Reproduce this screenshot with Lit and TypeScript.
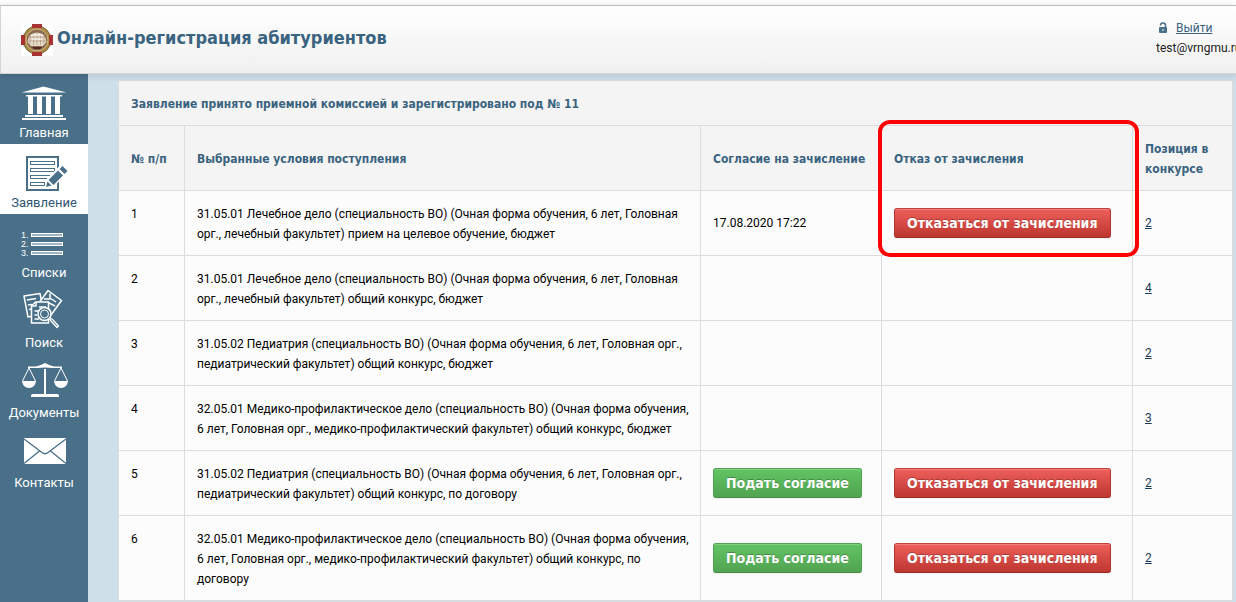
import { LitElement, html, svg, css, nothing } from 'lit';
import { customElement, state } from 'lit/decorators.js';
import { classMap } from 'lit/directives/class-map.js';

interface Condition {
  text: string;
  agreedAt?: string;
  canAgree?: boolean;
  canRefuse?: boolean;
  position: number;
}

const CONDITIONS: Condition[] = [
  {
    text: '31.05.01 Лечебное дело (специальность ВО) (Очная форма обучения, 6 лет, Головная орг., лечебный факультет) прием на целевое обучение, бюджет',
    agreedAt: '17.08.2020 17:22',
    canRefuse: true,
    position: 2,
  },
  {
    text: '31.05.01 Лечебное дело (специальность ВО) (Очная форма обучения, 6 лет, Головная орг., лечебный факультет) общий конкурс, бюджет',
    position: 4,
  },
  {
    text: '31.05.02 Педиатрия (специальность ВО) (Очная форма обучения, 6 лет, Головная орг., педиатрический факультет) общий конкурс, бюджет',
    position: 2,
  },
  {
    text: '32.05.01 Медико-профилактическое дело (специальность ВО) (Очная форма обучения, 6 лет, Головная орг., медико-профилактический факультет) общий конкурс, бюджет',
    position: 3,
  },
  {
    text: '31.05.02 Педиатрия (специальность ВО) (Очная форма обучения, 6 лет, Головная орг., педиатрический факультет) общий конкурс, по договору',
    canAgree: true,
    canRefuse: true,
    position: 2,
  },
  {
    text: '32.05.01 Медико-профилактическое дело (специальность ВО) (Очная форма обучения, 6 лет, Головная орг., медико-профилактический факультет) общий конкурс, по договору',
    canAgree: true,
    canRefuse: true,
    position: 2,
  },
];

const homeIcon = svg`
  <g fill="#fff">
    <path d="M23.500 2.500 L46.500 8.500 H1.500 Z"/>
    <rect x="6" y="11" width="36" height="1.500"/>
    <rect x="8" y="12" width="5" height="18"/>
    <rect x="17" y="12" width="5" height="18"/>
    <rect x="26" y="12" width="5" height="18"/>
    <rect x="35" y="12" width="5" height="18"/>
    <rect x="5" y="31" width="38" height="2"/>
    <rect x="2" y="34" width="44" height="2"/>
  </g>`;

const formIcon = svg`
  <g fill="none" stroke="#4a7089">
    <rect x="7" y="3" width="31" height="33" stroke-width="2"/>
    <rect x="10.500" y="7.500" width="24" height="3"/>
    <rect x="10.500" y="14.500" width="24" height="3"/>
    <rect x="10.500" y="21.500" width="24" height="3"/>
    <rect x="10.500" y="28.500" width="14" height="3"/>
  </g>
  <path d="M24 34 L27 24.500 L41.500 10 L49 17.500 L34.500 32 Z" fill="#fff"/>
  <g fill="#4a7089">
    <path d="M26 33 L27.500 27.500 L31.500 31.500 Z"/>
    <path d="M28.500 26 L38 16.500 L43 21.500 L33.500 31 Z"/>
    <path d="M39.500 15 L42.500 12 L47.500 17 L44.500 20 Z"/>
  </g>`;

const listIcon = svg`
  <g fill="#fff" font-family="Liberation Sans, sans-serif" font-size="9">
    <text x="1" y="14">1.</text>
    <text x="1" y="23">2.</text>
    <text x="1" y="32">3.</text>
  </g>
  <g fill="#a2b5c4" stroke="#fff">
    <rect x="11.500" y="9.500" width="31" height="3"/>
    <rect x="11.500" y="18.500" width="31" height="3"/>
    <rect x="11.500" y="27.500" width="31" height="3"/>
  </g>`;

const searchIcon = svg`
  <g fill="#4a7089" stroke="#fff" stroke-width="1.500" stroke-linejoin="round">
    <path d="M4 2 L20 -0.500 L24 20 L8 23 Z"/>
    <path d="M28 -3.500 L41.500 6.500 L31 21 L19 9 Z"/>
    <path d="M30 -0.500 V5 L24 5 M30 4 L36 8 M27 8 L35 12" fill="none"/>
    <path d="M7 6 L16 4.500 M8 11 L12 10.500 M9 15.500 L12 15" fill="none"/>
    <path d="M15.500 8 H28.500 V29 H11.500 V12 Z"/>
    <path d="M16 8 V12 H12 M19 13 H26 M14.500 17 H19 M14.500 21 H17 M14.500 25 H19" fill="none"/>
    <circle cx="24.500" cy="20" r="6.500"/>
    <circle cx="24.500" cy="20" r="4" stroke-width="1"/>
    <path d="M29.500 25 L31 27 L37 33.500 L38.500 32 L32.500 25.500 L30 24" stroke-width="1.300"/>
  </g>`;

const scalesIcon = svg`
  <g fill="#fff">
    <path d="M8 2.500 H16 Q21 1 25 -1 Q29 1 34 2.500 H42 V4 H33 Q29 3.500 25 3.500 Q21 3.500 17 4 H8 Z"/>
    <rect x="24" y="5" width="2" height="26"/>
    <path d="M2 17 H16 Q15 24 9 24 Q3 24 2 17 Z"/>
    <path d="M34 17 H48 Q47 24 41 24 Q35 24 34 17 Z"/>
    <path d="M11 33 V31.500 Q11 30 13 30 H37 Q39 30 39 31.500 V33 Z"/>
  </g>
  <path d="M9 4 L2.500 17 M9 4 L15.500 17 M41 4 L34.500 17 M41 4 L47.500 17" stroke="#fff" fill="none"/>`;

const mailIcon = svg`
  <rect x="4" y="4" width="42" height="26" fill="#fff"/>
  <path d="M4 5 L22 18.500 Q25 21 28 18.500 L46 5 M4 29.500 L19.500 17 M46 29.500 L30.500 17" stroke="#4a7089" stroke-width="1.300" fill="none"/>`;

const NAV = [
  { label: 'Главная', icon: homeIcon },
  { label: 'Заявление', icon: formIcon },
  { label: 'Списки', icon: listIcon },
  { label: 'Поиск', icon: searchIcon },
  { label: 'Документы', icon: scalesIcon },
  { label: 'Контакты', icon: mailIcon },
];

@customElement('side-nav')
export class SideNav extends LitElement {
  @state() private active = 1;

  static styles = css`
    :host {
      display: block;
      flex: none;
      width: 88px;
      background: #4a7089;
      font: 13px/20px Roboto, sans-serif;
    }
    .item {
      display: flex;
      flex-direction: column;
      align-items: center;
      gap: 1px;
      padding: 10px 0 1px;
      color: #fff;
      text-decoration: none;
    }
    .item.active {
      background: #fff;
      color: #2f5673;
    }
    .icon {
      width: 48px;
      height: 38px;
      overflow: visible;
    }
  `;

  private select(event: Event, index: number) {
    event.preventDefault();
    this.active = index;
  }

  render() {
    return html`<nav>
      ${NAV.map(
        (item, i) => html`<a
          class=${classMap({ item: true, active: i === this.active })}
          href="#"
          @click=${(e: Event) => this.select(e, i)}
          ><svg class="icon" viewBox="0 0 48 38" aria-hidden="true">${item.icon}</svg
          ><span>${item.label}</span></a
        >`,
      )}
    </nav>`;
  }
}

@customElement('page-header')
export class PageHeader extends LitElement {
  static styles = css`
    :host {
      display: flex;
      align-items: center;
      justify-content: space-between;
      position: relative;
      z-index: 1;
      box-sizing: border-box;
      height: 69px;
      padding-left: 20px;
      border: 1px solid #d4d4d4;
      border-top-color: #bbb;
      border-right: 0;
      background: linear-gradient(#fff, #f0f0f0);
      box-shadow: 0 1px 8px rgba(0, 0, 0, 0.15);
    }
    .brand {
      display: flex;
      align-items: center;
      gap: 4px;
    }
    .emblem {
      width: 32px;
      height: 32px;
    }
    h1 {
      margin: 0;
      padding-bottom: 4px;
      color: #3a6380;
      font: bold 18px/24px 'DejaVu Sans Condensed', sans-serif;
    }
    .user {
      width: 80px;
      padding-bottom: 3px;
      overflow: hidden;
      white-space: nowrap;
      color: #222;
      font: 12px/20px Roboto, sans-serif;
    }
    .exit {
      display: flex;
      align-items: center;
      gap: 8px;
      padding-left: 2px;
    }
    .exit a {
      color: #3a6380;
    }
    .lock {
      width: 10px;
      height: 12px;
    }
  `;

  render() {
    return html`
      <div class="brand">
        <svg class="emblem" viewBox="0 0 32 32" aria-hidden="true">
          <rect width="32" height="32" fill="#fff" />
          <circle cx="16" cy="16" r="14" fill="#a88a48" stroke="#7d6430" />
          <g fill="#a93232">
            <rect x="11" y="0" width="10" height="4" />
            <rect x="11" y="28" width="10" height="4" />
            <rect x="0" y="11" width="4" height="10" />
            <rect x="28" y="11" width="4" height="10" />
          </g>
          <circle cx="16" cy="16" r="11" fill="#8a6a50" stroke="#d3bc7c" />
          <path d="M6.500 18 a9.500 9.500 0 1 1 19 0 L22 22 H10 Z" fill="#e6dac8" />
          <path d="M9 12 V20 M12.500 10 V21 M16 9 V21 M19.500 10 V21 M23 12 V20 M7 17 H25 M8 13 H24" stroke="#b09a82" stroke-width="0.700" />
          <path d="M10 11 H22 M11 15 H21" stroke="#fff" />
          <path d="M11 23 H21 L19 25 H13 Z" fill="#54261f" />
        </svg>
        <h1>Онлайн-регистрация абитуриентов</h1>
      </div>
      <div class="user">
        <div class="exit">
          <svg class="lock" viewBox="0 0 10 12" aria-hidden="true">
            <path d="M2.500 3.500 Q2.500 1 5 1 Q7.500 1 7.500 3.500 V6" fill="none" stroke="#4a7089" stroke-width="1.500" />
            <rect x="1" y="5" width="8" height="6" rx="1" fill="#4a7089" />
            <rect x="4.500" y="7" width="1" height="2" fill="#fff" />
          </svg>
          <a href="#">Выйти</a>
        </div>
        <div>test@vrngmu.ru</div>
      </div>
    `;
  }
}

@customElement('application-table')
export class ApplicationTable extends LitElement {
  static styles = css`
    :host {
      display: block;
      font: 12px/20px Roboto, sans-serif;
      color: #000;
    }
    table {
      width: 100%;
      table-layout: fixed;
      border-collapse: collapse;
      background: #fcfcfc;
    }
    .col-number {
      width: 66px;
    }
    .col-consent {
      width: 181px;
    }
    .col-refusal {
      width: 251px;
    }
    .col-position {
      width: 100px;
    }
    th,
    td {
      padding: 12px;
      border: 1px solid #dcdcdc;
      text-align: left;
      vertical-align: middle;
    }
    th,
    .number,
    .text {
      padding-top: 13px;
      padding-bottom: 11px;
    }
    th {
      background: #f4f4f4;
      color: #3a6380;
      font: bold 12px/20px 'DejaVu Sans Condensed', sans-serif;
    }
    .number {
      vertical-align: top;
      white-space: nowrap;
    }
    thead .number {
      vertical-align: middle;
    }
    .text {
      padding-right: 8px;
    }
    .refusal {
      position: relative;
    }
    .highlight {
      position: absolute;
      top: -6px;
      left: -4px;
      right: -7px;
      height: 129px;
      border: 4px solid #f00;
      border-radius: 12px;
      pointer-events: none;
    }
    td a {
      color: #1b3a5a;
    }
    button {
      display: block;
      height: 30px;
      padding: 0 12px;
      border: 1px solid;
      border-radius: 3px;
      color: #fff;
      font: bold 14px/20px 'DejaVu Sans Condensed', sans-serif;
      white-space: nowrap;
      text-shadow: 0 -1px 0 rgba(0, 0, 0, 0.25);
      box-shadow: inset 0 1px 0 rgba(255, 255, 255, 0.2), 0 1px 2px rgba(0, 0, 0, 0.05);
      cursor: pointer;
    }
    .agree {
      border-color: #51a351 #51a351 #458a45;
      background: linear-gradient(#62c462, #51a351);
    }
    .refuse {
      border-color: #c0423c #b03530 #9c2c27;
      background: linear-gradient(#ee5f5b, #bd362f);
    }
  `;

  render() {
    return html`<table>
      <colgroup>
        <col class="col-number" />
        <col />
        <col class="col-consent" />
        <col class="col-refusal" />
        <col class="col-position" />
      </colgroup>
      <thead>
        <tr>
          <th colspan="5">Заявление принято приемной комиссией и зарегистрировано под № 11</th>
        </tr>
        <tr>
          <th class="number">№ п/п</th>
          <th>Выбранные условия поступления</th>
          <th>Согласие на зачисление</th>
          <th class="refusal">Отказ от зачисления<span class="highlight"></span></th>
          <th>Позиция в конкурсе</th>
        </tr>
      </thead>
      <tbody>
        ${CONDITIONS.map(
          (c, i) => html`<tr>
            <td class="number">${i + 1}</td>
            <td class="text">${c.text}</td>
            <td>
              ${c.agreedAt ?? nothing}
              ${c.canAgree ? html`<button class="agree" type="button">Подать согласие</button>` : nothing}
            </td>
            <td>
              ${c.canRefuse ? html`<button class="refuse" type="button">Отказаться от зачисления</button>` : nothing}
            </td>
            <td><a href="#">${c.position}</a></td>
          </tr>`,
        )}
      </tbody>
    </table>`;
  }
}

@customElement('app-root')
export class AppRoot extends LitElement {
  static styles = css`
    :host {
      display: flex;
      flex-direction: column;
      box-sizing: border-box;
      min-height: 100vh;
      padding-top: 5px;
      background: #fff;
    }
    .body {
      display: flex;
      flex: 1;
      background: #cfdfe9;
    }
    main {
      flex: 1;
      min-width: 0;
      padding: 6px 3px 0 30px;
    }
  `;

  render() {
    return html`
      <page-header></page-header>
      <div class="body">
        <side-nav></side-nav>
        <main><application-table></application-table></main>
      </div>
    `;
  }
}
